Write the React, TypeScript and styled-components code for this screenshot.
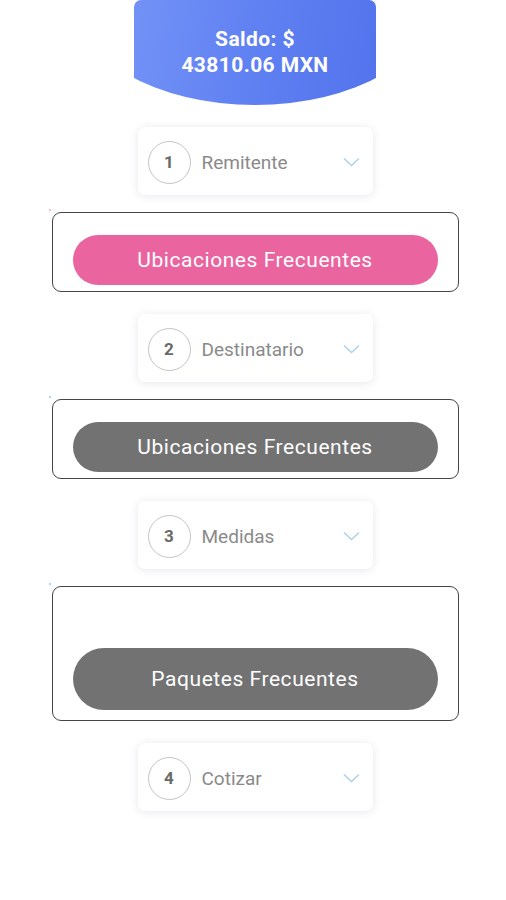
import styled, { createGlobalStyle } from 'styled-components';

const GlobalStyle = createGlobalStyle`
  html, body {
    margin: 0;
    padding: 0;
    background: #ffffff;
    font-family: Roboto, 'Liberation Sans', sans-serif;
  }
`;

type Step = { num: number; label: string };

const Chevron = () => (
  <svg width="17" height="10" viewBox="0 0 17 10" fill="none">
    <path d="M1 1.5 L8.5 8.5 L16 1.5" stroke="#a9d0ec" strokeWidth="1.4" />
  </svg>
);

const StepCard = ({ num, label }: Step) => (
  <Card>
    <NumberCircle>{num}</NumberCircle>
    <StepLabel>{label}</StepLabel>
    <Chevron />
  </Card>
);

const App = () => {
  return (
    <Page>
      <GlobalStyle />
      <Balance>
        <span>Saldo: $</span>
        <span>43810.06 MXN</span>
      </Balance>

      <StepCard num={1} label="Remitente" />
      <Frame $dot="#f3a6c4">
        <PillButton $color="#ea64a0">Ubicaciones Frecuentes</PillButton>
      </Frame>

      <StepCard num={2} label="Destinatario" />
      <Frame $dot="#9cc3ef">
        <PillButton $color="#727272">Ubicaciones Frecuentes</PillButton>
      </Frame>

      <StepCard num={3} label="Medidas" />
      <Frame $dot="#9cc3ef" $tall>
        <PillButton $color="#727272" $large>
          Paquetes Frecuentes
        </PillButton>
      </Frame>

      <StepCard num={4} label="Cotizar" />
    </Page>
  );
};

export default App;

const Page = styled.div`
  width: 506px;
  min-height: 900px;
  display: flex;
  flex-direction: column;
  align-items: center;
  padding-left: 4px;
  box-sizing: border-box;
`;

const Balance = styled.div`
  width: 242px;
  height: 105px;
  box-sizing: border-box;
  padding-top: 26px;
  display: flex;
  flex-direction: column;
  align-items: center;
  background: linear-gradient(100deg, #7392f7 0%, #6182f2 45%, #5273ec 100%);
  border-radius: 7px 7px 0 0;
  clip-path: ellipse(181px 105px at 50% 0);
  color: #ffffff;
  font-weight: 700;
  font-size: 21px;
  letter-spacing: 0.4px;
  line-height: 26px;
`;

const Card = styled.div`
  width: 235px;
  height: 68px;
  margin: 22px 0 17px;
  box-sizing: border-box;
  padding: 2px 13px 0 10px;
  display: flex;
  align-items: center;
  background: #ffffff;
  border-radius: 7px;
  box-shadow: 0 1px 8px rgba(40, 60, 90, 0.12);
`;

const NumberCircle = styled.div`
  width: 43px;
  height: 43px;
  flex-shrink: 0;
  box-sizing: border-box;
  border: 1.5px solid #c4c4c4;
  border-radius: 50%;
  display: flex;
  align-items: center;
  justify-content: center;
  color: #6a6a6a;
  font-weight: 700;
  font-size: 17px;
`;

const StepLabel = styled.span`
  flex: 1;
  margin-left: 11px;
  color: #8a8a8a;
  font-size: 19px;
`;

const Frame = styled.div<{ $dot: string; $tall?: boolean }>`
  position: relative;
  width: 407px;
  height: ${({ $tall }) => ($tall ? '135px' : '80px')};
  box-sizing: border-box;
  padding: 0 20px ${({ $tall }) => ($tall ? '10px' : '6px')};
  display: flex;
  flex-direction: column;
  justify-content: flex-end;
  border: 1.5px solid #454545;
  border-radius: 9px;

  &::before {
    content: '';
    position: absolute;
    left: -4px;
    top: -4px;
    width: 2px;
    height: 2px;
    border-radius: 50%;
    background: ${({ $dot }) => $dot};
  }
`;

const PillButton = styled.div<{ $color: string; $large?: boolean }>`
  height: ${({ $large }) => ($large ? '62px' : '50px')};
  display: flex;
  align-items: center;
  justify-content: center;
  border-radius: 31px;
  background: ${({ $color }) => $color};
  color: #ffffff;
  font-size: 21px;
  letter-spacing: 0.55px;
`;
